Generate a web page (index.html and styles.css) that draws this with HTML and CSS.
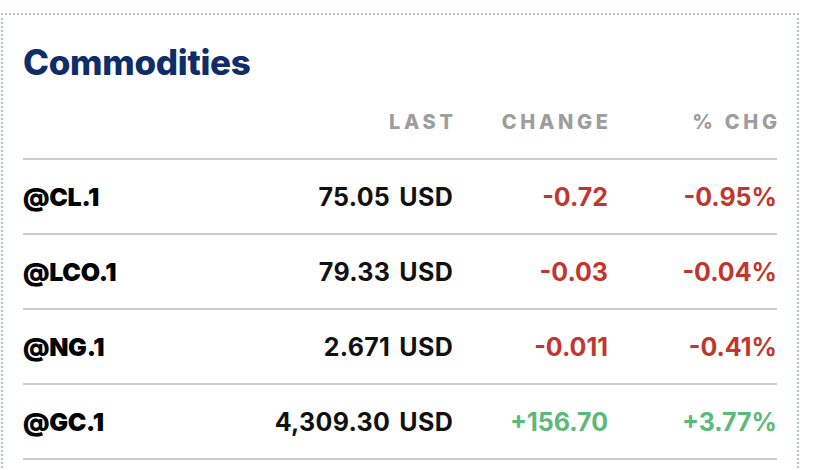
FILE: index.html
```html
<!DOCTYPE html>
<html lang="en">
<head>
<meta charset="utf-8">
<title>Commodities</title>
<link rel="stylesheet" href="styles.css">
</head>
<body>
<section class="card">
  <h2 class="title">Commodities</h2>
  <div class="table">
    <div class="row head">
      <div class="cell sym"></div>
      <div class="cell num">LAST</div>
      <div class="cell num">CHANGE</div>
      <div class="cell num">% CHG</div>
    </div>
    <div class="row">
      <div class="cell sym">@CL.1</div>
      <div class="cell num last">75.05 USD</div>
      <div class="cell num down">-0.72</div>
      <div class="cell num down">-0.95%</div>
    </div>
    <div class="row">
      <div class="cell sym">@LCO.1</div>
      <div class="cell num last">79.33 USD</div>
      <div class="cell num down">-0.03</div>
      <div class="cell num down">-0.04%</div>
    </div>
    <div class="row">
      <div class="cell sym">@NG.1</div>
      <div class="cell num last">2.671 USD</div>
      <div class="cell num down">-0.011</div>
      <div class="cell num down">-0.41%</div>
    </div>
    <div class="row">
      <div class="cell sym">@GC.1</div>
      <div class="cell num last">4,309.30 USD</div>
      <div class="cell num up">+156.70</div>
      <div class="cell num up">+3.77%</div>
    </div>
  </div>
</section>
</body>
</html>
```

FILE: styles.css
```css
html, body {
  margin: 0;
  padding: 0;
  background: #ffffff;
}

body {
  font-family: "Inter", "Lato", "Noto Sans", sans-serif;
  color: #000;
}

.card {
  margin: 13px 0 0 1px;
  width: 754px;
  padding: 25px 20px 0 20px;
  border: 2px dotted #b7c0d2;
  border-bottom: none;
  min-height: 440px;
}

.title {
  margin: 0;
  font-size: 35px;
  line-height: 44px;
  font-weight: 800;
  color: #0f2d69;
  letter-spacing: -0.3px;
}

.row {
  display: grid;
  grid-template-columns: 1fr 200px 155px 169px;
  align-items: center;
  height: 73px;
  border-bottom: 2px solid #cccccc;
}

.row.head {
  height: 76px;
  padding-top: 2px;
  box-sizing: border-box;
  font-size: 20px;
  line-height: 24px;
  font-weight: 800;
  color: #9d9d9d;
  letter-spacing: 3.7px;
}

.row.head .num {
  margin-right: -3.7px;
}

.row:not(.head) {
  font-size: 25px;
  line-height: 30px;
}

.sym {
  font-weight: 900;
  color: #000;
  letter-spacing: -0.3px;
}

.num {
  text-align: right;
}

.last {
  font-weight: 700;
  color: #111;
  word-spacing: 3px;
  letter-spacing: 0.3px;
}

.down {
  font-weight: 700;
  color: #c1372f;
}

.up {
  font-weight: 700;
  color: #5cb87b;
}
```
